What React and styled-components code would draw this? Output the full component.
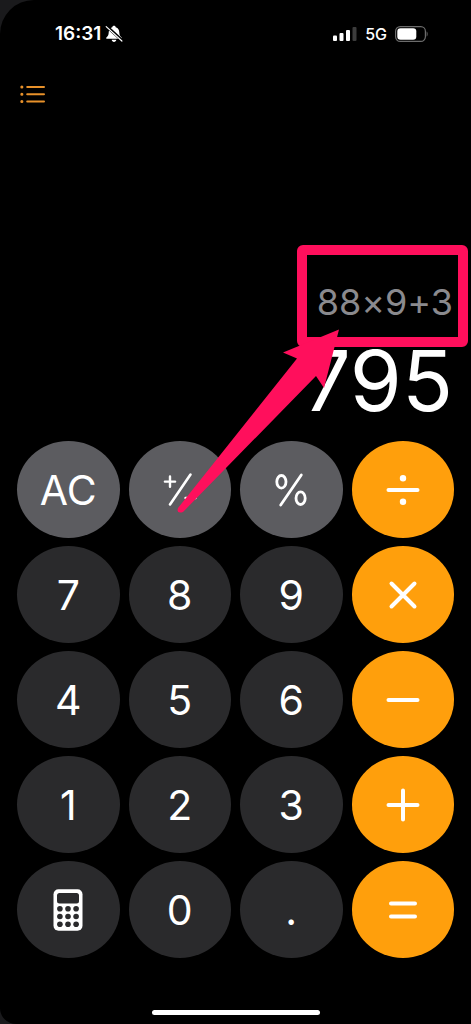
import React, { useState } from "react";
import styled, { createGlobalStyle } from "styled-components";


const GlobalStyle = createGlobalStyle`
    body {
        margin: 0;
        background: #1a1a1c;
    }
    * {
        box-sizing: border-box;
    }
`;
const Screen = styled.main`
    display: flex;
    flex-direction: column;
    min-height: 100vh;
    background: #000;
    border-radius: 34px 0 0 16px;
    color: #fff;
    font-family: Inter, "Liberation Sans", sans-serif;
    overflow: hidden;
`;
const StatusBar = styled.header`
    display: flex;
    align-items: center;
    justify-content: space-between;
    height: 68px;
    padding: 0 42px 0 55px;
`;
const StatusGroup = styled.div`
    display: flex;
    align-items: center;
    gap: ${({ $gap }) => $gap}px;
`;
const Time = styled.span`
    font-size: 19px;
    font-weight: 600;
    line-height: 24px;
`;
const Network = styled.span`
    font-size: 16px;
    font-weight: 500;
    line-height: 24px;
`;
const Toolbar = styled.nav`
    display: flex;
    padding: 12px 19px;
`;
const HistoryButton = styled.button`
    display: flex;
    padding: 0;
    border: 0;
    background: none;
    color: #e8912a;
`;
const Display = styled.section`
    position: relative;
    display: flex;
    flex: 1;
    flex-direction: column;
    align-items: flex-end;
    justify-content: flex-end;
    padding: 0 18px 16px;
`;
const Expression = styled.div`
    color: #8a8a8e;
    font-size: 36px;
    font-weight: 400;
    font-feature-settings: "calt" 0;
    line-height: 48px;
`;
const Result = styled.output`
    font-size: 84px;
    line-height: 88px;
    margin-top: 11px;
`;
const Marker = styled.svg`
    position: absolute;
    right: 0;
    bottom: -80px;
    width: 300px;
    height: 280px;
    pointer-events: none;
    z-index: 1;
`;
const Keypad = styled.section`
    display: grid;
    grid-template-columns: repeat(4, 1fr);
    grid-auto-rows: 97px;
    gap: 8px 9px;
    padding: 0 17px;
`;
const keyColors = {
    digit: "#2a2a2c",
    action: "#5c5c60",
    operator: "#ff9f0c",
};
const Key = styled.button`
    display: flex;
    align-items: center;
    justify-content: center;
    padding: 0;
    border: 0;
    border-radius: 50%;
    background: ${({ $kind }) => keyColors[$kind]};
    color: #fff;
    font-family: inherit;
    font-size: 41px;
    font-weight: 400;
`;
const Footer = styled.footer`
    display: flex;
    align-items: flex-end;
    justify-content: center;
    height: 66px;
    padding-bottom: 9px;
`;
const HomeIndicator = styled.div`
    width: 168px;
    height: 5px;
    border-radius: 3px;
    background: #fff;
`;


const BellOff = () => (
    <svg width="18" height="18" viewBox="0 0 18 18" aria-hidden="true">
        <path d="M9 .8c-1 0-1.600.6-1.700 1.400C4.700 3 3.800 5 3.700 7.500 3.600 10 2.900 11 1.400 12.500c-.5.6-.2 1.300.6 1.300h14c.8 0 1.100-.7.6-1.300-1.500-1.500-2.200-2.500-2.300-5-.1-2.500-1-4.500-3.600-5.300C10.600 1.400 10 .8 9 .8zM6.700 14.700h4.600c-.2 1.300-1.100 2.200-2.300 2.200s-2.100-.9-2.300-2.200z" fill="#fff" />
        <path d="M2 1.600L17 15.400" stroke="#000" strokeWidth="3" />
        <path d="M1.200 1.600L16.900 16" stroke="#fff" strokeWidth="1.200" strokeLinecap="round" />
    </svg>
);

const Signal = () => (
    <svg width="24" height="16" viewBox="0 0 24 16" aria-hidden="true">
        <rect x="0" y="9.500" width="4" height="5.500" rx="1" fill="#fff" />
        <rect x="6.500" y="7" width="4" height="8" rx="1" fill="#fff" />
        <rect x="13" y="4" width="4" height="11" rx="1" fill="#fff" />
        <rect x="19.500" y="1" width="4" height="14" rx="1" fill="#3c3c3c" />
    </svg>
);

const Battery = () => (
    <svg width="34" height="16" viewBox="0 0 34 16" aria-hidden="true">
        <rect x="0.600" y="0.600" width="29.800" height="14.800" rx="4.600" fill="none" stroke="#6c6c6c" strokeWidth="1.200" />
        <rect x="2.300" y="2.300" width="19" height="11.400" rx="3.200" fill="#fff" />
        <path d="M31.600 5.500c1.400.5 1.400 4.500 0 5z" fill="#6c6c6c" />
    </svg>
);

const ListIcon = () => (
    <svg width="27" height="28" viewBox="0 0 27 28" fill="none" stroke="currentColor" strokeWidth="2" strokeLinecap="round" aria-hidden="true">
        <path d="M8.200 7H25M8.200 14.300H25M8.200 21.600H25" />
        <path d="M2.800 7h.1M2.800 14.300h.1M2.800 21.600h.1" strokeWidth="3" />
    </svg>
);

const OperatorIcon = ({ d, dots }) => (
    <svg width="36" height="36" viewBox="0 0 36 36" fill="none" stroke="#fff" strokeWidth="4" strokeLinecap="round" aria-hidden="true">
        <path d={d} />
        {dots && <path d={dots} strokeWidth="6.400" />}
    </svg>
);

const PlusMinusIcon = () => (
    <svg width="36" height="36" viewBox="0 0 36 36" fill="none" stroke="#fff" strokeWidth="2.400" strokeLinecap="round" aria-hidden="true">
        <path d="M2.900 9.600h10.200M8 4.500v10.200" />
        <path d="M28.500 2.500L8 32.500" strokeWidth="2.600" />
        <path d="M23.500 26h10" />
    </svg>
);

const PercentIcon = () => (
    <svg width="36" height="36" viewBox="0 0 36 36" fill="none" stroke="#fff" strokeWidth="2.800" strokeLinecap="round" aria-hidden="true">
        <ellipse cx="8.400" cy="9.800" rx="4.600" ry="6.300" />
        <ellipse cx="27.600" cy="26.200" rx="4.600" ry="6.300" />
        <path d="M28.300 3L7.700 33" />
    </svg>
);

const CalculatorIcon = () => (
    <svg width="30" height="42" viewBox="0 0 30 42" aria-hidden="true">
        <rect x="0.500" y="0.300" width="29" height="41.400" rx="5" fill="#fff" />
        <rect x="4" y="4" width="22" height="10.500" rx="2.500" fill="#2a2a2c" />
        {[19.700, 27.500, 35.300].map((y) => [6.900, 15, 23.100].map((x) => (
            <circle key={`${x}-${y}`} cx={x} cy={y} r="2.800" fill="#2a2a2c" />
        )))}
    </svg>
);


const keys = [
    { name: "AC", kind: "action" },
    { name: "plus minus", kind: "action", icon: <PlusMinusIcon /> },
    { name: "percent", kind: "action", icon: <PercentIcon /> },
    { name: "divide", kind: "operator", icon: <OperatorIcon d="M3.500 18h29" dots="M18 6.200h.01M18 29.800h.01" /> },
    { name: "7", kind: "digit" },
    { name: "8", kind: "digit" },
    { name: "9", kind: "digit" },
    { name: "multiply", kind: "operator", icon: <OperatorIcon d="M6.500 6.500l23 23M29.500 6.500l-23 23" /> },
    { name: "4", kind: "digit" },
    { name: "5", kind: "digit" },
    { name: "6", kind: "digit" },
    { name: "subtract", kind: "operator", icon: <OperatorIcon d="M3.500 18h29" /> },
    { name: "1", kind: "digit" },
    { name: "2", kind: "digit" },
    { name: "3", kind: "digit" },
    { name: "add", kind: "operator", icon: <OperatorIcon d="M3.500 18h29M18 3.500v29" /> },
    { name: "calculator mode", kind: "digit", icon: <CalculatorIcon /> },
    { name: "0", kind: "digit" },
    { name: ".", kind: "digit" },
    { name: "equals", kind: "operator", icon: <OperatorIcon d="M6 11.500h24M6 24.500h24" /> },
];


export default function App() {
    const [result, setResult] = useState("795");

    const onKeyClick = (name) => {
        if (name === "AC") {
            setResult("0");
        }
    };

    return (
        <Screen>
            <GlobalStyle />
            <StatusBar>
                <StatusGroup $gap={4}>
                    <Time>16:31</Time>
                    <BellOff />
                </StatusGroup>
                <StatusGroup $gap={8}>
                    <Signal />
                    <Network>5G</Network>
                    <Battery />
                </StatusGroup>
            </StatusBar>
            <Toolbar>
                <HistoryButton type="button" aria-label="History">
                    <ListIcon />
                </HistoryButton>
            </Toolbar>
            <Display>
                <Expression>88×9+3</Expression>
                <Result>{ result }</Result>
                <Marker viewBox="0 0 300 280" aria-hidden="true">
                    <rect x="131" y="9" width="161" height="92" rx="1" fill="none" stroke="#ff0f5c" strokeWidth="10" strokeLinejoin="round" />
                    <path d="M168 88.500L112 111.500L126 117.500L7 267Q5 273 12 271L145 135L153 147Z" fill="#ff0f5c" />
                </Marker>
            </Display>
            <Keypad>
                {keys.map(({ name, kind, icon }) => (
                    <Key
                        key={ name }
                        type="button"
                        $kind={ kind }
                        aria-label={ name }
                        onClick={() => onKeyClick(name)}
                    >
                        { icon || name }
                    </Key>
                ))}
            </Keypad>
            <Footer>
                <HomeIndicator />
            </Footer>
        </Screen>
    );
}
